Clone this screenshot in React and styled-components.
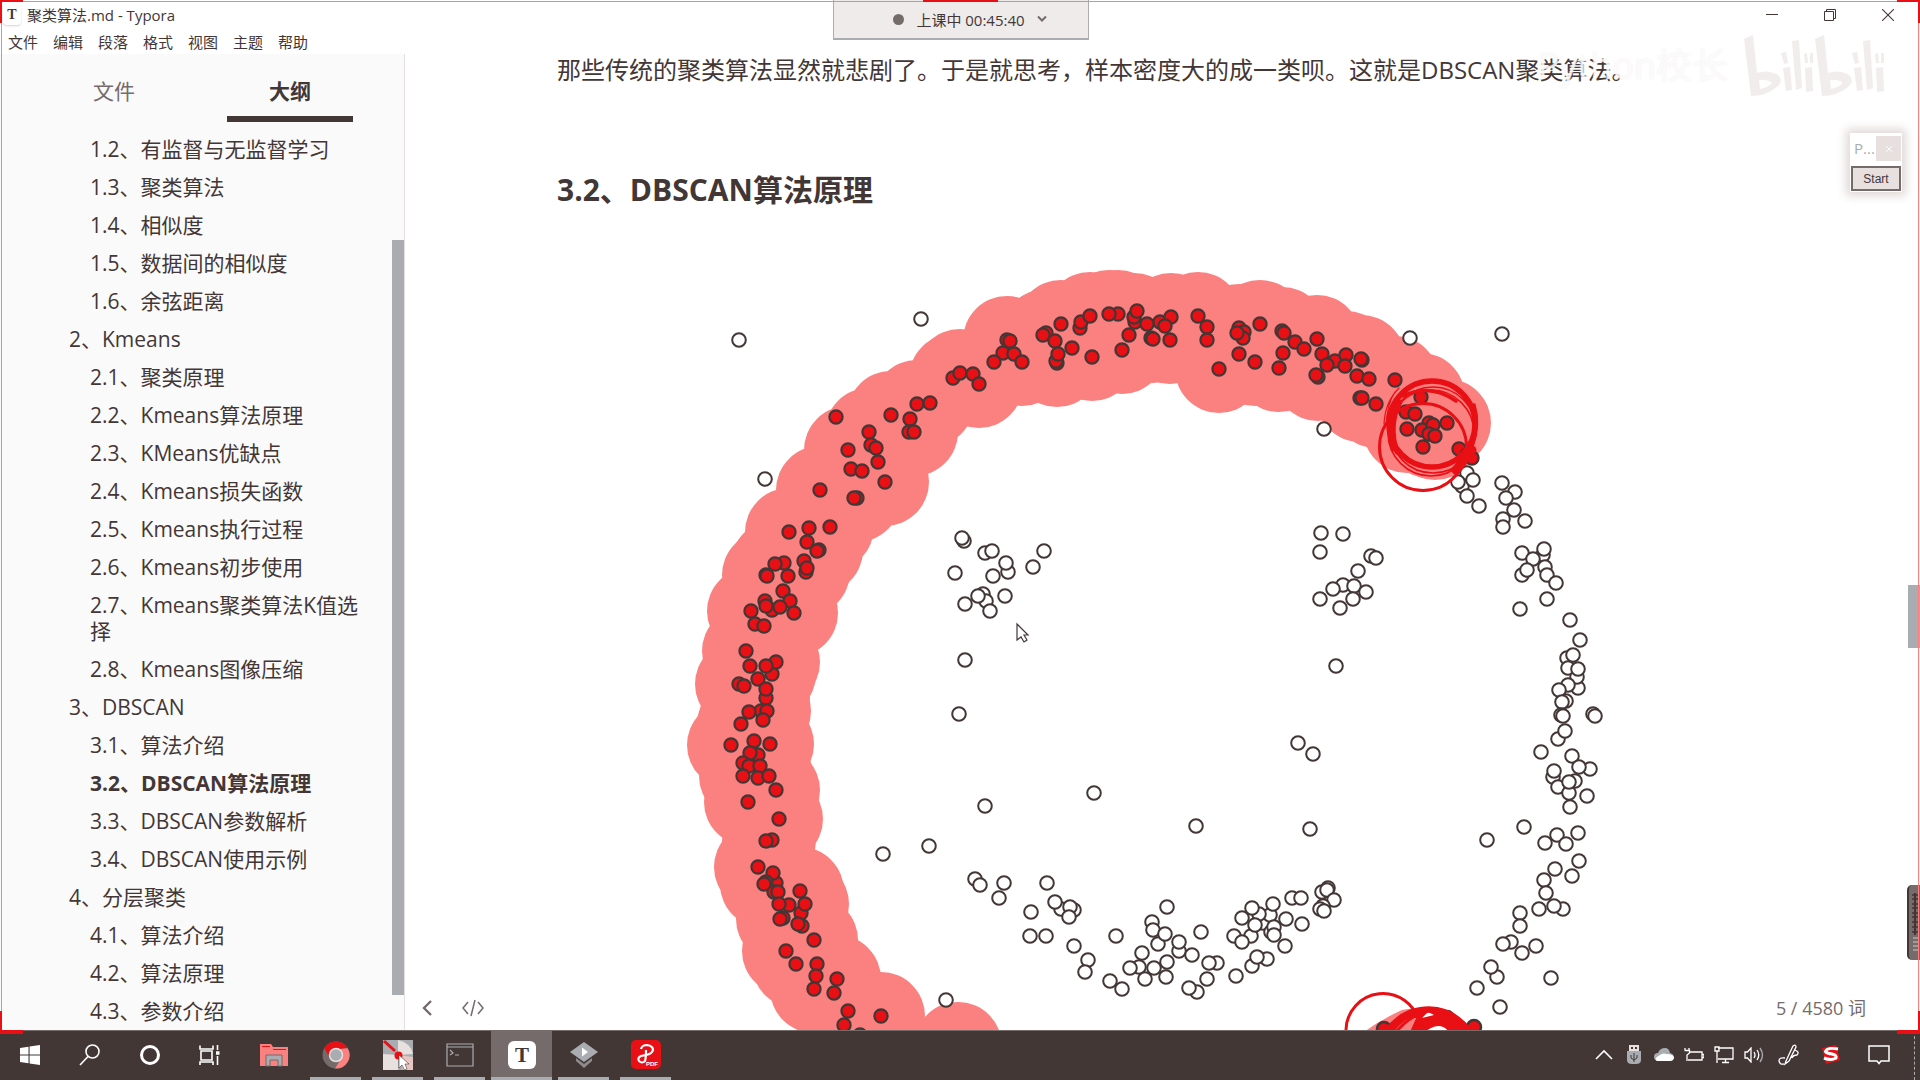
import React from "react";
import styled, { createGlobalStyle, css } from "styled-components";

const ink = "#433736";
const red = "#e80f15";
const pink = "#fb8080";
const grey = "#a9adb1";
const sans = '"Open Sans", "Noto Sans CJK SC", sans-serif';

const GlobalStyle = createGlobalStyle`
  * { box-sizing: border-box; }
  body { margin: 0; background: #fff; color: ${ink}; font-family: ${sans}; overflow: hidden; }
  button { font: inherit; color: inherit; border: 0; background: none; padding: 0; margin: 0; }
  a { color: inherit; text-decoration: none; }
  svg { display: block; flex: none; }
`;

const Desktop = styled.div`
  position: relative;
  display: flex;
  flex-direction: column;
  height: 100vh;
  overflow: hidden;
`;

/* ---------- window chrome ---------- */

const TitleBar = styled.header`
  display: flex;
  align-items: center;
  height: 30px;
  padding-left: 3px;
  flex: none;
`;

const AppGlyph = styled.span`
  display: grid;
  place-items: center;
  width: 18px;
  height: 20px;
  border-radius: 4px;
  box-shadow: 0 1px 2px #d8d0ce;
  font: 700 14px/20px "Liberation Serif", serif;
`;

const WindowTitle = styled.h1`
  margin: 0;
  padding-left: 6px;
  flex: 1;
  font: 400 15px/28px ${sans};
`;

const WindowButton = styled.button`
  display: grid;
  place-items: center;
  width: 58px;
  height: 28px;
`;

const WindowButtons = styled.div`
  display: flex;
  padding-right: 3px;
`;

const MenuBar = styled.nav`
  display: flex;
  gap: 15px;
  height: 24px;
  padding-left: 8px;
  flex: none;
`;

const MenuItem = styled.button`
  font-size: 15px;
  line-height: 24px;
`;

const Body = styled.div`
  display: flex;
  flex: 1;
  min-height: 0;
`;

/* ---------- sidebar ---------- */

const Sidebar = styled.aside`
  display: flex;
  flex-direction: column;
  width: 405px;
  flex: none;
  background: #fafafa;
  border-right: 1px solid #e6dfdd;
`;

const Tabs = styled.div`
  display: flex;
  gap: 50px;
  padding: 12px 51px 8px;
  flex: none;
`;

const Tab = styled.button`
  width: 126px;
  height: 56px;
  font-size: 21px;
  line-height: 50px;
  border-bottom: 6px solid transparent;
  color: #756b6a;
  ${(p) =>
    p.$active &&
    css`
      font-weight: 700;
      color: ${ink};
      border-bottom-color: ${ink};
    `}
`;

const OutlineArea = styled.div`
  display: flex;
  flex: 1;
  min-height: 0;
`;

const Outline = styled.ul`
  list-style: none;
  margin: 0;
  padding: 0 22px 0 0;
  flex: 1;
  overflow: hidden;
`;

const OutlineItem = styled.li`
  padding: 6px 0 6px ${(p) => (p.$level === 1 ? 69 : 90)}px;
  font-size: 21px;
  line-height: 26px;
  font-weight: ${(p) => (p.$active ? 700 : 400)};
`;

const OutlineTrack = styled.div`
  width: 12px;
  padding: 110px 0 35px;
`;

const OutlineThumb = styled.div`
  height: 100%;
  background: ${grey};
`;

/* ---------- document ---------- */

const Editor = styled.main`
  position: relative;
  flex: 1;
  min-width: 0;
  display: flex;
  overflow: hidden;
`;

const Article = styled.article`
  flex: 1;
  min-width: 0;
  padding: 0 181px 0 152px;
`;

const Paragraph = styled.p`
  margin: 0 0 84px;
  font-size: 24px;
  line-height: 32px;
  white-space: nowrap;
`;

const Heading = styled.h3`
  margin: 0 0 40px;
  font-size: 30px;
  line-height: 40px;
  font-weight: 700;
`;

const Plot = styled.svg`
  width: 1170px;
  height: 780px;
`;

const StatusLeft = styled.div`
  position: absolute;
  left: 16px;
  bottom: 8px;
  display: flex;
  gap: 26px;
`;

const StatusButton = styled.button`
  display: grid;
  place-items: center;
  height: 28px;
  color: #756b6a;
`;

const WordCount = styled.button`
  position: absolute;
  right: 54px;
  bottom: 8px;
  font-size: 18px;
  line-height: 28px;
  color: #756b6a;
`;

const PageThumb = styled.div`
  position: absolute;
  right: 0;
  top: 531px;
  width: 12px;
  height: 63px;
  background: ${grey};
`;

const SideHandle = styled.div`
  position: absolute;
  right: 0;
  bottom: 70px;
  width: 13px;
  height: 75px;
  border-radius: 5px 0 0 5px;
  border-left: 2px solid ${ink};
  background: #756b6a;
  overflow: hidden;
`;

/* ---------- overlays ---------- */

const ClassTimer = styled.button`
  position: absolute;
  top: 0;
  left: 50%;
  margin-left: -127px;
  width: 256px;
  height: 40px;
  display: flex;
  align-items: center;
  justify-content: center;
  gap: 12px;
  padding-left: 18px;
  background: #eeebea;
  border: 1px solid ${grey};
  border-top: 0;
  border-bottom-width: 2px;
  font-size: 15px;
`;

const TimerDot = styled.span`
  width: 11px;
  height: 11px;
  border-radius: 50%;
  background: #756b6a;
`;

const Watermark = styled.div`
  position: absolute;
  top: 32px;
  right: 36px;
  display: flex;
  align-items: center;
  gap: 16px;
  font-size: 36px;
  line-height: 68px;
  color: rgba(255, 255, 255, 0.75);
  text-shadow: 0 0 2px rgba(232, 224, 222, 0.6);
  pointer-events: none;
`;

const MiniWindow = styled.section`
  position: absolute;
  top: 133px;
  right: 18px;
  width: 52px;
  padding: 3px 1px 1px;
  background: #fff;
  box-shadow: 0 0 9px 4px #e0d9d7;
`;

const MiniHead = styled.div`
  display: flex;
  justify-content: space-between;
  padding-left: 3px;
  margin-bottom: 5px;
  font-size: 15px;
  line-height: 25px;
  color: ${grey};
`;

const MiniClose = styled.button`
  display: grid;
  place-items: center;
  width: 25px;
  height: 25px;
  background: #e8e0de;
  color: #fff;
`;

const StartButton = styled.button`
  display: block;
  width: 50px;
  height: 25px;
  border: 2px solid #756b6a;
  background: #e8e0de;
  font: 12px/20px "Liberation Sans", sans-serif;
`;

const Frame = styled.div`
  position: absolute;
  inset: 1px 1px 48px;
  border: 1px solid ${pink};
  border-bottom: 0;
  pointer-events: none;
`;

const Corner = styled.i`
  position: absolute;
  width: 23px;
  height: 23px;
  border: 0 solid ${red};
  ${(p) => (p.$at.includes("t") ? "top:-2px;border-top-width:2px;" : "bottom:-2px;border-bottom-width:4px;")}
  ${(p) => (p.$at.includes("l") ? "left:-2px;border-left-width:2px;" : "right:-2px;border-right-width:2px;")}
`;

const TopMark = styled.i`
  position: absolute;
  top: -2px;
  left: 50%;
  margin-left: -37px;
  width: 75px;
  height: 2px;
  background: ${red};
`;

/* ---------- taskbar ---------- */

const Taskbar = styled.footer`
  display: flex;
  justify-content: space-between;
  height: 50px;
  flex: none;
  background: ${ink};
  border-top: 1px solid #756b6a;
`;

const TaskGroup = styled.div`
  display: flex;
  gap: ${(p) => p.$gap}px;
`;

const TaskButton = styled.button`
  display: grid;
  place-items: center;
  width: ${(p) => p.$width}px;
  height: 49px;
  padding-bottom: 2px;
  background: ${(p) => (p.$active ? "#756b6a" : "transparent")};
`;

const RunningTask = styled(TaskButton)`
  box-shadow: inset 0 -3px 0 ${grey};
  border: 0 solid ${ink};
  border-width: 0 ${(p) => (p.$active ? 0 : 5)}px;
`;

const Tray = styled.div`
  display: flex;
  align-items: stretch;
  padding-right: 5px;
`;

const TrayButton = styled.button`
  display: grid;
  place-items: center;
  width: ${(p) => p.$width}px;
  padding-bottom: 2px;
`;

const TrayEdge = styled.span`
  width: 1px;
  margin-left: 9px;
  border-left: 1px dashed ${grey};
`;

/* ---------- data ---------- */

const outline = [
  [2, "1.2、有监督与无监督学习"],
  [2, "1.3、聚类算法"],
  [2, "1.4、相似度"],
  [2, "1.5、数据间的相似度"],
  [2, "1.6、余弦距离"],
  [1, "2、Kmeans"],
  [2, "2.1、聚类原理"],
  [2, "2.2、Kmeans算法原理"],
  [2, "2.3、KMeans优缺点"],
  [2, "2.4、Kmeans损失函数"],
  [2, "2.5、Kmeans执行过程"],
  [2, "2.6、Kmeans初步使用"],
  [2, "2.7、Kmeans聚类算法K值选择"],
  [2, "2.8、Kmeans图像压缩"],
  [1, "3、DBSCAN"],
  [2, "3.1、算法介绍"],
  [2, "3.2、DBSCAN算法原理"],
  [2, "3.3、DBSCAN参数解析"],
  [2, "3.4、DBSCAN使用示例"],
  [1, "4、分层聚类"],
  [2, "4.1、算法介绍"],
  [2, "4.2、算法原理"],
  [2, "4.3、参数介绍"],
];

const parse = (s) => s.trim().split(/\s+/).map((p) => p.split(",").map(Number));

const core = parse(`
891,415 917,404 930,403 910,419 909,432 914,432 869,432 871,445 876,448 848,450 878,462 851,469 862,471
885,482 820,490 857,498 854,498 953,378 960,373 973,374 979,384 1003,353 1007,340 1010,341 1014,354
994,362 1022,362 1046,333 1043,335 1055,341 1061,324 1072,348 1057,363 1056,361 1058,354 1092,357 1080,328 1081,322 1090,316
1118,314 1109,314 1135,322 1134,317 1160,322 1147,324 1171,317 1165,326 1129,335 1122,350 1151,338 1153,339 1170,340
1198,316 789,532 809,528 830,527 807,542 819,550 817,551 804,561 806,572 807,568 784,563 775,564 766,575 767,576
788,576 783,591 765,601 772,610 766,606 790,601 780,607 794,613 751,611 755,624 764,626 746,651 750,666 772,674 776,662
766,666 758,679 739,684 744,686 766,698 766,689 761,711 767,711 749,712 763,720 741,724 731,745 754,741 770,744
758,755 750,753 743,763 749,766 760,766 743,776 758,778 769,776 776,790 748,802 779,819 772,840 766,841 758,867
776,883 773,873 766,882 774,892 764,884 778,892 800,891 789,905 779,904 801,913 805,904 783,918 780,919 802,926 798,924
814,940 786,951 796,964 817,964 816,976 814,989 837,979 834,993 848,1011 881,1016 844,1025 860,1035
1207,327 1207,340 1219,369 1239,328 1244,332 1243,338 1237,333 1239,354 1255,362 1260,324 1282,331 1284,333 1295,342
1304,349 1283,353 1279,368 1317,339 1322,354 1335,361 1327,365 1346,355 1345,366 1362,360 1361,359 1318,377 1316,375
1357,376 1369,379 1395,380 1360,398 1362,398 1376,404 1421,397 1406,412 1415,414 1407,429 1429,423 1422,430 1433,425
1447,423 1429,434 1435,436 958,1046`);

const frontier = parse(`836,417 1137,311 1423,447 1459,449 1467,455 1472,458`);

const unvisited = parse(`
739,340 921,319 765,479 964,541 962,538 985,553 992,551 1044,551 1033,567 1008,572 1006,563 955,573 993,576 983,594
986,601 978,596 1005,596 965,604 990,611 965,660 959,714 985,806 1094,793 929,846 883,854 946,1000 975,879 980,885
1004,883 999,898 1047,883 1031,912 1030,936 1046,936 1061,909 1055,902 1074,910 1070,907 1069,917 1074,946 1088,960
1085,972 1116,936 1110,981 1122,989 1142,953 1139,967 1130,968 1167,907 1152,922 1158,944 1153,930 1165,934 1154,968
1145,979 1167,962 1166,977 1179,951 1179,942 1192,955 1196,826 1197,992 1189,988 1201,932 1217,963 1209,963 1207,979
1336,666 1298,743 1313,754 1310,829 1236,976 1252,966 1267,959 1257,957 1234,936 1251,936 1242,942 1242,918 1285,946
1263,923 1270,915 1259,914 1255,925 1252,908 1273,904 1271,932 1274,927 1274,935 1286,919 1302,924 1292,898 1301,898
1322,892 1328,888 1327,890 1334,900 1323,906 1320,909 1324,911 1567,658 1568,668 1573,655 1578,688 1577,677 1578,669
1568,685 1559,690 1566,701 1562,702 1561,715 1563,716 1558,739 1565,731 1593,714 1595,716 1541,752 1572,756 1590,769
1579,767 1553,777 1554,771 1575,781 1558,787 1569,793 1569,782 1587,796 1570,807 1524,827 1487,840 1545,843 1557,835
1566,844 1578,833 1579,861 1572,876 1555,869 1544,880 1546,893 1539,909 1563,909 1554,906 1520,913 1520,926 1511,942
1503,944 1522,953 1536,946 1497,977 1491,967 1477,988 1551,978 1500,1007 1410,338 1502,334 1324,429 1321,533 1343,534
1320,552 1371,556 1376,558 1358,571 1343,585 1333,589 1354,586 1366,592 1353,599 1320,599 1340,608 1467,473 1462,486
1458,482 1473,480 1467,496 1479,506 1502,483 1515,492 1506,498 1514,510 1503,519 1503,527 1525,521 1522,553 1543,555
1544,549 1533,559 1545,567 1522,575 1527,570 1547,575 1556,583 1547,599 1520,609 1570,620 1580,640`);

function ClusterPlot() {
  return (
    <Plot viewBox="557 250 1170 780" role="img" aria-label="DBSCAN">
      <g fill={pink}>
        {core.map(([x, y], i) => <circle key={i} cx={x} cy={y} r="44" />)}
      </g>
      <g fill="#fff" stroke={ink} strokeWidth="2">
        {unvisited.map(([x, y], i) => <circle key={i} cx={x} cy={y} r="6.8" />)}
      </g>
      <g fill={red} stroke={ink} strokeWidth="2.2">
        {core.concat(frontier).map(([x, y], i) => <circle key={i} cx={x} cy={y} r="6.6" />)}
      </g>
      <g fill="none" stroke={red} strokeLinecap="round">
        <circle cx="1423" cy="447" r="43.5" strokeWidth="3" />
        <circle cx="1432" cy="424" r="43" strokeWidth="5.5" />
        <circle cx="1433" cy="430" r="43" strokeWidth="1.6" />
        <circle cx="1431" cy="433" r="43" strokeWidth="1.6" />
        <path d="M1394 412 Q1386 430 1394 449 M1400 402 Q1388 425 1397 452" strokeWidth="5" />
        <path d="M1403 396 Q1430 383 1456 401 M1474 405 Q1480 425 1472 446" strokeWidth="3.5" />
        <path d="M1472 450 L1456 470" strokeWidth="9" />
        <path d="M1399 388 Q1385 402 1384 424 M1395 392 Q1387 404 1386 426" strokeWidth="1.2" />
      </g>
      <path d="M1364 1032 Q1380 1020 1402 1010 Q1440 1002 1466 1032Z" fill={pink} />
      <g fill={red} stroke={ink} strokeWidth="2.5">
        <circle cx="1384" cy="1029" r="7" />
        <circle cx="1447" cy="1018" r="7" />
        <circle cx="1474" cy="1027" r="7" />
      </g>
      <path
        d="M1382 1032 Q1400 1009 1420 1007 Q1452 1002 1474 1032 L1448 1032 Q1440 1022 1424 1032 L1410 1032 L1418 1014 Q1402 1020 1394 1032Z"
        fill={red}
      />
      <path d="M1422 1018 L1428 1012 L1434 1015Z" fill="#fff" />
      <path d="M1425 1032 Q1440 1020 1449 1032Z" fill="#fff" />
      <path d="M1346 1030 A37 37 0 0 1 1419 1022 V1032 M1396 1032 Q1432 990 1472 1032" fill="none" stroke={red} strokeWidth="3" />
      <path d="M1017 624 V640 L1021 637 L1024 642 L1027 640 L1024 635 H1028Z" fill="#fff" stroke={ink} strokeWidth="1.2" />
    </Plot>
  );
}

const Line = ({ w = 24, h = 24, sw = 1.6, color = "#fff", d, children }) => (
  <svg width={w} height={h} viewBox={`0 0 ${w} ${h}`} fill="none" stroke={color} strokeWidth={sw}>
    {d && <path d={d} />}
    {children}
  </svg>
);

function BiliLogo() {
  return (
    <svg width="140" height="64" viewBox="0 0 140 64" fill="#f1edec">
      {[0, 71].map((x) => (
        <g key={x} transform={`translate(${x} 0)`}>
          <path
            fillRule="evenodd"
            d="M0 5 L9 1 L13 39 Q24 35 34 41 Q40 47 33 53 Q22 62 7 62Z M15 46 L16 55 Q23 54 28 49 Q23 45 15 46Z"
          />
          <path d="M39 34 L46 33 L48 56 L42 57Z M48 7 L55 6 L58 54 L52 56Z M61 34 L68 33 L69 57 L62 58Z" />
          <path d="M37 19 L42 18 L44 29 L40 30Z M60 20 L63 19 L64 29 L61 29Z M66 19 L69 19 L69 29 L66 29Z" />
        </g>
      ))}
    </svg>
  );
}

function TaskbarIcons() {
  return (
    <TaskGroup $gap={3}>
      <TaskGroup $gap={0}>
        <TaskButton $width={60} aria-label="开始">
          <svg width="20" height="20" viewBox="0 0 20 20" fill="#fff">
            <path d="M0 3 L8.5 1.8 V9.4 H0Z M9.6 1.6 L20 0 V9.4 H9.6Z M0 10.6 H8.5 V18.2 L0 17Z M9.6 10.6 H20 V20 L9.6 18.4Z" />
          </svg>
        </TaskButton>
        <TaskButton $width={60} aria-label="搜索">
          <Line><circle cx="14.5" cy="8.5" r="6.5" /><path d="M10 13.5 L2 22" /></Line>
        </TaskButton>
        <TaskButton $width={60} aria-label="Cortana">
          <Line sw={3}><circle cx="12" cy="12" r="8.5" /></Line>
        </TaskButton>
        <TaskButton $width={60} aria-label="任务视图">
          <Line d="M2 2.5 V6 H15 V2.5 M3 8 H14 V17 H3Z M2 22 V19 H15 V22 M19.5 2 V7 M19.5 13 V22">
            <path d="M18 10 H21.5" strokeWidth="3.5" />
          </Line>
        </TaskButton>
      </TaskGroup>
      <TaskGroup $gap={1}>
        <TaskButton $width={61} aria-label="资源管理器">
          <svg width="28" height="24" viewBox="0 0 28 24">
            <path d="M0 1 H11 L13 4 H28 V23 H0Z" fill={pink} />
            <path d="M2 3.5 H10 M13 6.5 H26" stroke={red} strokeWidth="1" />
            <path d="M6 23 V12 H22 V23 H18 V17 H10 V23Z" fill={grey} stroke="#756b6a" />
          </svg>
        </TaskButton>
        <RunningTask $width={61} aria-label="Chrome">
          <svg width="28" height="28" viewBox="0 0 28 28">
            <circle cx="14" cy="14" r="13.5" fill="#756b6a" />
            <path d="M2.3 7.2 A13.5 13.5 0 0 1 25.7 7.2 L14 8 L8 17Z" fill={red} />
            <path d="M25.7 7.2 A13.5 13.5 0 0 1 13 27.5 L19.5 17 L18 8Z" fill={pink} />
            <circle cx="14" cy="14" r="6.5" fill={grey} stroke="#e8e0de" strokeWidth="1.5" />
          </svg>
        </RunningTask>
        <RunningTask $width={61} aria-label="录屏">
          <svg width="30" height="30" viewBox="0 0 30 30">
            <rect width="30" height="30" fill={grey} />
            <path d="M15 15 L0 14 V30 H15Z M15 15 L15 0 Q28 3 30 14Z" fill="#e8e0de" />
            <path d="M15 15 L30 17 V30 H20Z" fill="#e8c6c4" />
            <path d="M1 1 L12 11" stroke={red} strokeWidth="3" />
            <circle cx="15.5" cy="15.5" r="4" fill={red} />
            <path d="M16 15 V28 L19 25 L21.5 30 L24 29 L22 24 H26Z" fill="#fff" stroke={ink} strokeWidth="0.6" />
          </svg>
        </RunningTask>
        <RunningTask $width={61} aria-label="终端">
          <Line w={28} h={24} sw={1.2} color={grey} d="M1 1 H27 V23 H1Z M1 4 H27 M4 7 L7 10 L4 12 M9 12 H13" />
        </RunningTask>
        <RunningTask $width={61} $active aria-label="Typora">
          <svg width="28" height="28" viewBox="0 0 28 28">
            <rect width="28" height="28" rx="6" fill="#fff" />
            <text x="14" y="21" textAnchor="middle" fontFamily="Liberation Serif, serif" fontWeight="700" fontSize="21" fill={ink}>T</text>
          </svg>
        </RunningTask>
        <RunningTask $width={61} aria-label="播放器">
          <svg width="30" height="26" viewBox="0 0 30 26">
            <path d="M15 0 L29 10 L15 20 L1 10Z" fill={grey} />
            <path d="M7 16 L15 22 L23 16 V19 L15 26 L7 19Z" fill="#8f8b8b" />
            <path d="M13 5.5 V14.5 L19 10Z" fill="#fff" />
          </svg>
        </RunningTask>
        <RunningTask $width={61} aria-label="PDF">
          <svg width="30" height="29" viewBox="0 0 30 29">
            <rect width="30" height="29" rx="5" fill={red} />
            <path d="M10 9 Q11 5 16 5 Q22 6 22 10 Q21 14 15 15 L10 16 Q6 18 8 21 Q11 24 14 21 Q15 18 15 10" fill="none" stroke="#fff" strokeWidth="2.2" />
            <text x="15" y="26" fontFamily="Liberation Sans, sans-serif" fontWeight="700" fontSize="6" fill="#fff">PDF</text>
          </svg>
        </RunningTask>
      </TaskGroup>
    </TaskGroup>
  );
}

function TrayIcons() {
  return (
    <Tray>
      <TrayButton $width={30} aria-label="显示隐藏的图标"><Line w={18} h={12} d="M1 10 L9 2 L17 10" /></TrayButton>
      <TrayButton $width={30} aria-label="USB">
        <svg width="16" height="20" viewBox="0 0 16 20">
          <path d="M3 0 H13 V6 H3Z" fill="#e8e0de" />
          <path d="M5 2 H7 V4 H5Z M9 2 H11 V4 H9Z" fill={ink} />
          <path d="M1 6 H15 V15 Q15 19 10 19 H6 Q1 19 1 15Z" fill={grey} />
          <path d="M8 8 V17 M5 10 V13 L8 15 L11 13 V10" fill="none" stroke={ink} />
        </svg>
      </TrayButton>
      <TrayButton $width={30} aria-label="OneDrive">
        <svg width="20" height="14" viewBox="0 0 20 14">
          <path d="M4 13 Q0 12 0 9 Q0 5 4 5 Q6 0 11 0 Q15 0 16 5 Q20 6 20 10 Q19 13 16 13Z" fill={grey} />
          <path d="M3 13 Q0 11 3 9 Q9 4 12 6 Q20 6 20 10 Q19 13 16 13Z" fill="#fff" />
        </svg>
      </TrayButton>
      <TrayButton $width={30} aria-label="电池">
        <Line w={20} h={14} sw={1.3} d="M5 4 H18 V12 H4 M18 6.5 H20 V9.5 H18 M1 0 V2 M5 0 V2 M0.5 2.5 H5.5 V5 Q3 7 3 7 V13" />
      </TrayButton>
      <TrayButton $width={30} aria-label="网络">
        <Line w={20} h={18} sw={1.3} d="M4 2 H19 V13 H4 M11.500 13 V16 M8 16.500 H15 M1 1 H5 V5 H1Z M3 5 V17" />
      </TrayButton>
      <TrayButton $width={30} aria-label="音量">
        <Line w={20} h={16} sw={1.3} d="M1 5 H3.500 L7 1 V15 L3.500 11 H1Z M10 5 Q12 8 10 11 M13 3 Q16.500 8 13 13">
          <path d="M16 1 Q21 8 16 15" stroke={grey} />
        </Line>
      </TrayButton>
      <TrayButton $width={40} aria-label="手写笔">
        <Line w={22} h={22} sw={1.3} d="M8 17 L15 2 Q18 0 18 3 L11 17 L7 20Z M7 14 Q1 13 1 17 Q2 21 6 20 M17 6 Q22 8 19 11 Q15 11 14 14" />
      </TrayButton>
      <TrayButton $width={44} aria-label="搜狗输入法">
        <svg width="20" height="19" viewBox="0 0 20 19">
          <path d="M1 3 L15 0 L19 15 L5 19Z" fill={red} />
          <path d="M17 4 Q6 2 4.500 6.500 Q6 8.500 11 9 Q16 10 15 13 Q10 16 3 13" fill="none" stroke="#fff" strokeWidth="3" />
        </svg>
      </TrayButton>
      <TrayButton $width={52} aria-label="通知"><Line w={22} h={20} sw={1.5} d="M1 1 H21 V16 H13 L11 18.500 L9 16 H1Z" /></TrayButton>
      <TrayEdge />
    </Tray>
  );
}

export default function App() {
  return (
    <Desktop>
      <GlobalStyle />
      <TitleBar>
        <AppGlyph>T</AppGlyph>
        <WindowTitle>聚类算法.md - Typora</WindowTitle>
        <WindowButtons>
          <WindowButton aria-label="最小化"><Line w={12} h={12} sw={1} color={ink} d="M0 5.500 H12" /></WindowButton>
          <WindowButton aria-label="还原"><Line w={12} h={12} sw={1} color={ink} d="M0.500 2.500 H9.500 V11.500 H0.500Z M2.500 2.500 V0.500 H11.500 V9.500 H9.500" /></WindowButton>
          <WindowButton aria-label="关闭"><Line w={12} h={12} sw={1.1} color={ink} d="M0 0 L12 12 M12 0 L0 12" /></WindowButton>
        </WindowButtons>
      </TitleBar>
      <MenuBar>
        {["文件", "编辑", "段落", "格式", "视图", "主题", "帮助"].map((m) => <MenuItem key={m}>{m}</MenuItem>)}
      </MenuBar>

      <Body>
        <Sidebar>
          <Tabs>
            <Tab>文件</Tab>
            <Tab $active>大纲</Tab>
          </Tabs>
          <OutlineArea>
            <Outline>
              {outline.map(([level, text]) => (
                <OutlineItem key={text} $level={level} $active={text.startsWith("3.2")}>
                  <a href="#section">{text}</a>
                </OutlineItem>
              ))}
            </Outline>
            <OutlineTrack><OutlineThumb /></OutlineTrack>
          </OutlineArea>
        </Sidebar>

        <Editor>
          <Article>
            <Paragraph>那些传统的聚类算法显然就悲剧了。于是就思考，样本密度大的成一类呗。这就是DBSCAN聚类算法。</Paragraph>
            <Heading id="section">3.2、DBSCAN算法原理</Heading>
            <ClusterPlot />
          </Article>
          <StatusLeft>
            <StatusButton aria-label="返回"><Line w={14} h={18} sw={2.4} color="#756b6a" d="M10 2 L3 9 L10 16" /></StatusButton>
            <StatusButton aria-label="源代码模式"><Line w={24} h={18} sw={1.5} color="#756b6a" d="M7 3 L2 9 L7 15 M17 3 L22 9 L17 15 M14 1 L10 17" /></StatusButton>
          </StatusLeft>
          <WordCount>5 / 4580 词</WordCount>
          <PageThumb />
          <SideHandle>
            <Line w={11} h={75} sw={2} color={ink} d="M6 8 V50">
              <path d="M3 10 H9 M3 14 H9 M3 19 H9 M3 23 H9 M3 28 H9 M3 32 H9 M3 37 H9 M3 42 H9 M3 47 H9" strokeWidth="1.5" />
              <path d="M4 53 H9 M4 57 H9 M4 61 H9 M4 65 H9" stroke={grey} strokeWidth="1.5" />
            </Line>
          </SideHandle>
        </Editor>
      </Body>

      <Taskbar>
        <TaskbarIcons />
        <TrayIcons />
      </Taskbar>

      <Watermark>
        <span>Python校长</span>
        <BiliLogo />
      </Watermark>
      <MiniWindow>
        <MiniHead>
          <span>P...</span>
          <MiniClose aria-label="关闭"><Line w={8} h={8} sw={1} d="M1 1 L7 7 M7 1 L1 7" /></MiniClose>
        </MiniHead>
        <StartButton>Start</StartButton>
      </MiniWindow>
      <ClassTimer>
        <TimerDot />
        上课中 00:45:40
        <Line w={10} h={8} sw={2} color="#756b6a" d="M1 1.500 L5 5.500 L9 1.500" />
      </ClassTimer>
      <Frame>
        <TopMark />
        <Corner $at="tl" />
        <Corner $at="tr" />
        <Corner $at="bl" />
        <Corner $at="br" />
      </Frame>
    </Desktop>
  );
}
